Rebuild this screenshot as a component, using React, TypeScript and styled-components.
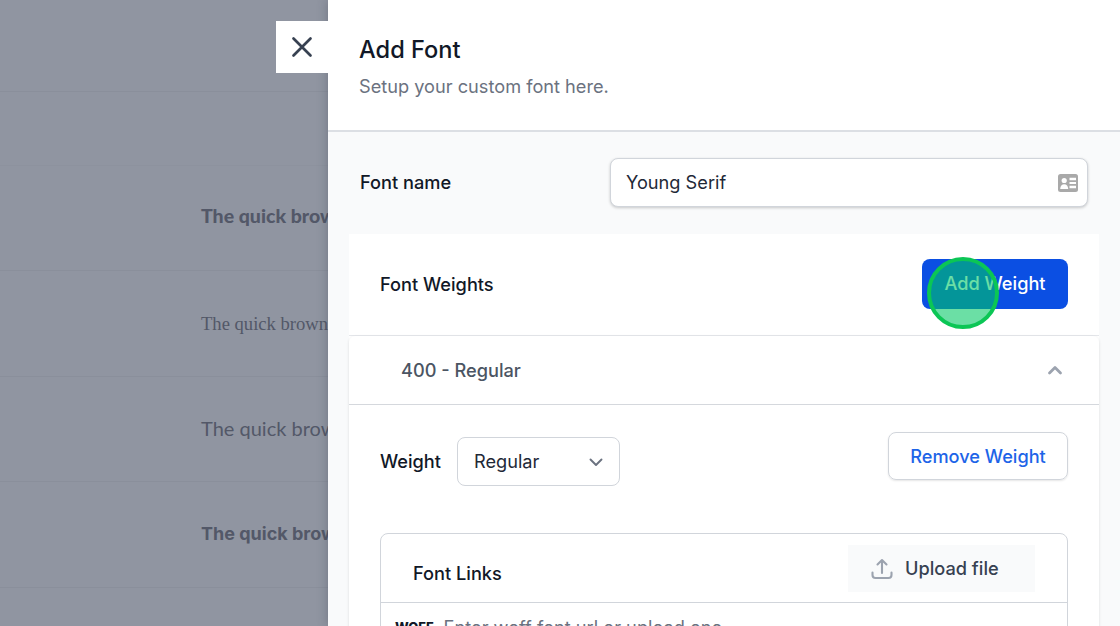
import { ReactElement } from "react";
import styled, { createGlobalStyle } from "styled-components";

const GlobalStyle = createGlobalStyle`
  html, body {
    margin: 0;
    padding: 0;
    height: 100%;
    overflow: hidden;
  }
  * {
    box-sizing: border-box;
  }
  body {
    font-family: Inter, "Liberation Sans", sans-serif;
    line-height: 21px;
    color: #111827;
  }
`;

type Sample = {
  family: string;
  weight: number;
  size: number;
  lift: number;
};

const samples: Sample[] = [
  { family: "Lato, sans-serif", weight: 900, size: 19.5, lift: 4 },
  { family: "'Liberation Serif', serif", weight: 400, size: 18.6, lift: 0 },
  { family: "Lato, sans-serif", weight: 400, size: 20, lift: 2 },
  { family: "Inter, sans-serif", weight: 700, size: 18, lift: 0 },
];

export default function App(): ReactElement {
  return (
    <Page>
      <GlobalStyle />
      <Backdrop>
        <TopRow />
        <BlankRow />
        {samples.map((sample) => (
          <SampleRow key={sample.family + sample.weight}>
            <SampleText {...sample}>
              The quick brown fox jumps over the lazy dog
            </SampleText>
          </SampleRow>
        ))}
      </Backdrop>
      <Panel>
        <CloseButton aria-label="Close">
          <svg width="24" height="24" viewBox="0 0 24 24" fill="none" stroke="#374151" strokeWidth="2.7" strokeLinecap="round">
            <path d="M3.5 3.5l17 17M20.500 3.500l-17 17" />
          </svg>
        </CloseButton>
        <Header>
          <Title>Add Font</Title>
          <Subtitle>Setup your custom font here.</Subtitle>
        </Header>
        <Body>
          <NameRow>
            <NameLabel>Font name</NameLabel>
            <NameInput>
              <span>Young Serif</span>
              <svg width="20" height="18" viewBox="0 0 20 18">
                <rect width="20" height="18" rx="2.500" fill="#a9a9a9" />
                <circle cx="6.200" cy="6.500" r="2.600" fill="#ffffff" />
                <path d="M2.200 15c0-3.200 1.700-4.800 4-4.800s4 1.600 4 4.800z" fill="#ffffff" />
                <path d="M11.500 3.800h6.500v2.400h-6.500zM11.500 7.900h6.500v2.200h-6.500zM11.500 11.800h6.500v2.400h-6.500z" fill="#ffffff" />
              </svg>
            </NameInput>
          </NameRow>
          <Card>
            <WeightsHeader>
              <WeightsTitle>Font Weights</WeightsTitle>
              <PrimaryButton>Add Weight</PrimaryButton>
            </WeightsHeader>
            <Accordion>
              <AccordionHead>
                <span>400 - Regular</span>
                <svg width="20" height="20" viewBox="0 0 20 20" fill="none" stroke="#9ca3af" strokeWidth="2.800" strokeLinecap="round" strokeLinejoin="round">
                  <path d="M4.500 13L10 7.500 15.500 13" />
                </svg>
              </AccordionHead>
              <AccordionBody>
                <WeightRow>
                  <WeightField>
                    <WeightLabel>Weight</WeightLabel>
                    <Select>
                      <span>Regular</span>
                      <svg width="20" height="20" viewBox="0 0 20 20" fill="none" stroke="#6b7280" strokeWidth="1.900" strokeLinecap="round" strokeLinejoin="round">
                        <path d="M4.500 7.500L10 13l5.500-5.500" />
                      </svg>
                    </Select>
                  </WeightField>
                  <OutlineButton>Remove Weight</OutlineButton>
                </WeightRow>
                <LinksBox>
                  <LinksHead>
                    <LinksTitle>Font Links</LinksTitle>
                    <UploadButton>
                      <svg width="24" height="24" viewBox="0 0 24 24" fill="none" stroke="#9ca3af" strokeWidth="2.100" strokeLinecap="round" strokeLinejoin="round">
                        <path d="M2.500 15.500v2.500A3 3 0 0 0 5.500 21h13a3 3 0 0 0 3-3v-2.500" />
                        <path d="M12 16V3M7.500 7.500L12 3l4.500 4.500" />
                      </svg>
                      <span>Upload file</span>
                    </UploadButton>
                  </LinksHead>
                  <LinkRow>
                    <FormatTag>WOFF</FormatTag>
                    <LinkPlaceholder>Enter woff font url or upload one</LinkPlaceholder>
                  </LinkRow>
                </LinksBox>
              </AccordionBody>
            </Accordion>
          </Card>
        </Body>
        <ClickMark />
      </Panel>
    </Page>
  );
}

const Page = styled.div`
  display: flex;
  width: 1120px;
  height: 626px;
  overflow: hidden;
  background: #9095a1;
`;

const Backdrop = styled.div`
  flex: 0 0 328px;
  overflow: hidden;
  background: #9095a1;
`;

const TopRow = styled.div`
  height: 92px;
  border-bottom: 1px solid #8a8f9b;
`;

const BlankRow = styled.div`
  height: 74px;
  border-bottom: 1px solid #8d929e;
`;

const SampleRow = styled.div`
  display: flex;
  align-items: center;
  height: 105.4px;
  padding-left: 201px;
  border-bottom: 1px solid #8a8f9b;
`;

const SampleText = styled.div<{ family: string; weight: number; size: number; lift: number }>`
  padding-bottom: ${(props) => props.lift}px;
  font-family: ${(props) => props.family};
  font-weight: ${(props) => props.weight};
  font-size: ${(props) => props.size}px;
  line-height: 24px;
  white-space: nowrap;
  color: #535868;
`;

const Panel = styled.div`
  position: relative;
  display: flex;
  flex-direction: column;
  flex: 1;
  min-width: 0;
  box-shadow: 0 0 10px rgba(55, 60, 75, 0.35);
`;

const CloseButton = styled.div`
  position: absolute;
  top: 21px;
  left: -52px;
  display: flex;
  align-items: center;
  justify-content: center;
  width: 52px;
  height: 52px;
  background: #ffffff;
`;

const Header = styled.div`
  height: 132px;
  padding: 35px 31px 0;
  background: #ffffff;
  border-bottom: 2px solid #dcdfe4;
`;

const Title = styled.div`
  font-size: 23.6px;
  font-weight: 450;
  line-height: 30px;
  color: #111827;
`;

const Subtitle = styled.div`
  margin-top: 9px;
  font-size: 18.2px;
  line-height: 24px;
  color: #6b7280;
`;

const Body = styled.div`
  flex: 1;
  min-height: 0;
  overflow: hidden;
  padding: 26px 21px 0;
  background: #f9fafb;
`;

const NameRow = styled.div`
  display: flex;
  align-items: center;
  padding: 0 11px;
`;

const NameLabel = styled.div`
  flex: 0 0 250px;
  font-size: 18.2px;
  font-weight: 450;
  color: #111827;
`;

const NameInput = styled.div`
  display: flex;
  align-items: center;
  justify-content: space-between;
  flex: 1;
  height: 49px;
  padding: 0 9px 0 15px;
  font-size: 18.2px;
  color: #1f2937;
  background: #ffffff;
  border: 1px solid #d1d5db;
  border-radius: 8px;
  box-shadow: 0 1px 3px rgba(0, 0, 0, 0.2);
`;

const Card = styled.div`
  margin-top: 27px;
  background: #ffffff;
`;

const WeightsHeader = styled.div`
  display: flex;
  align-items: center;
  justify-content: space-between;
  height: 102px;
  padding: 0 31px 2px;
  font-size: 18.2px;
  font-weight: 450;
  color: #111827;
  border-bottom: 1px solid #e5e7eb;
`;

const WeightsTitle = styled.div`
  padding-top: 2px;
`;

const PrimaryButton = styled.div`
  display: flex;
  align-items: center;
  justify-content: center;
  width: 146px;
  height: 50px;
  font-size: 18.2px;
  font-weight: 450;
  color: #ffffff;
  background: #0b4fe3;
  border-radius: 8px;
`;

const Accordion = styled.div`
  border-radius: 6px 6px 0 0;
  box-shadow: 0 1px 3px rgba(0, 0, 0, 0.12);
`;

const AccordionHead = styled.div`
  display: flex;
  align-items: center;
  justify-content: space-between;
  height: 69px;
  padding: 0 34px 0 52px;
  font-size: 18.2px;
  font-weight: 450;
  color: #4b5563;
  border-bottom: 1px solid #d5d8dd;
`;

const AccordionBody = styled.div`
  padding: 27px 31px 0;
`;

const WeightRow = styled.div`
  display: flex;
  align-items: flex-start;
  justify-content: space-between;
`;

const WeightField = styled.div`
  display: flex;
  align-items: center;
  gap: 16px;
  margin-top: 5px;
`;

const WeightLabel = styled.div`
  font-size: 18.2px;
  font-weight: 450;
  color: #111827;
`;

const Select = styled.div`
  display: flex;
  align-items: center;
  justify-content: space-between;
  width: 163px;
  height: 49px;
  padding: 0 13px 0 16px;
  font-size: 18.2px;
  color: #1f2937;
  border: 1px solid #d1d5db;
  border-radius: 8px;
`;

const OutlineButton = styled.div`
  display: flex;
  align-items: center;
  justify-content: center;
  width: 180px;
  height: 48px;
  font-size: 18.2px;
  font-weight: 450;
  color: #1d64e8;
  border: 1px solid #d1d5db;
  border-radius: 8px;
  box-shadow: 0 1px 2px rgba(0, 0, 0, 0.1);
`;

const LinksBox = styled.div`
  margin-top: 47px;
  border: 1px solid #d1d5db;
  border-radius: 8px 8px 0 0;
`;

const LinksHead = styled.div`
  display: flex;
  justify-content: space-between;
  height: 69px;
  padding: 11px 32px 0;
  border-bottom: 1px solid #d1d5db;
`;

const LinksTitle = styled.div`
  margin-top: 18px;
  font-size: 18.2px;
  font-weight: 450;
  color: #111827;
`;

const UploadButton = styled.div`
  display: flex;
  align-items: center;
  gap: 11px;
  width: 187px;
  height: 47px;
  padding-left: 22px;
  font-size: 18.2px;
  font-weight: 450;
  color: #374151;
  background: #f9fafb;
`;

const LinkRow = styled.div`
  display: flex;
  align-items: center;
  gap: 10px;
  height: 48px;
  padding-left: 14px;
`;

const FormatTag = styled.div`
  font-size: 13px;
  font-weight: 800;
  color: #111827;
`;

const LinkPlaceholder = styled.div`
  font-size: 18.2px;
  color: #6b7280;
`;

const ClickMark = styled.div`
  position: absolute;
  top: 257px;
  left: 599px;
  width: 72px;
  height: 72px;
  border: 4px solid #0bc655;
  border-radius: 50%;
  background: rgba(0, 200, 100, 0.58);
`;
